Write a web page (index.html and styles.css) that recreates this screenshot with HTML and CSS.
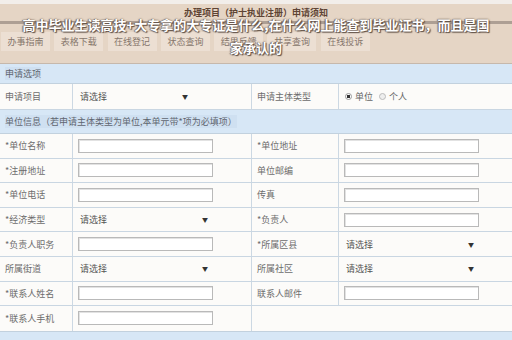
FILE: index.html
```html
<!DOCTYPE html>
<html lang="zh">
<head>
<meta charset="utf-8">
<link rel="stylesheet" href="styles.css">
</head>
<body>
<div class="page">
  <div class="topstrip"></div>
  <header class="header">
    <div class="title">办理项目（护士执业注册）申请须知</div>
    <div class="rule"></div>
    <nav class="tabs">
      <span class="tab">办事指南</span>
      <span class="tab">表格下载</span>
      <span class="tab">在线登记</span>
      <span class="tab">状态查询</span>
      <span class="tab">结果反馈</span>
      <span class="tab">共享查询</span>
      <span class="tab">在线投诉</span>
    </nav>
  </header>

  <div class="sec"><span class="sec-text">申请选项</span></div>
  <div class="row row-tall">
    <div class="cell lab">申请项目</div>
    <div class="cell val"><span class="sel sel-short"><span>请选择</span><span class="arrow">▼</span></span></div>
    <div class="cell lab">申请主体类型</div>
    <div class="cell val radios">
      <span class="radio on"></span><span>单位</span>
      <span class="radio off"></span><span>个人</span>
    </div>
  </div>
  <div class="sec sec-tall"><span class="sec-text">单位信息（若申请主体类型为单位,本单元带*项为必填项）</span></div>

  <div class="row">
    <div class="cell lab">*单位名称</div>
    <div class="cell val"><span class="inp"></span></div>
    <div class="cell lab">*单位地址</div>
    <div class="cell val"><span class="inp"></span></div>
  </div>
  <div class="row">
    <div class="cell lab">*注册地址</div>
    <div class="cell val"><span class="inp"></span></div>
    <div class="cell lab">单位邮编</div>
    <div class="cell val"><span class="inp"></span></div>
  </div>
  <div class="row">
    <div class="cell lab">*单位电话</div>
    <div class="cell val"><span class="inp"></span></div>
    <div class="cell lab">传真</div>
    <div class="cell val"><span class="inp"></span></div>
  </div>
  <div class="row">
    <div class="cell lab">*经济类型</div>
    <div class="cell val"><span class="sel"><span>请选择</span><span class="arrow">▼</span></span></div>
    <div class="cell lab">*负责人</div>
    <div class="cell val"><span class="inp"></span></div>
  </div>
  <div class="row">
    <div class="cell lab">*负责人职务</div>
    <div class="cell val"><span class="inp"></span></div>
    <div class="cell lab">*所属区县</div>
    <div class="cell val"><span class="sel"><span>请选择</span><span class="arrow">▼</span></span></div>
  </div>
  <div class="row">
    <div class="cell lab">所属街道</div>
    <div class="cell val"><span class="sel"><span>请选择</span><span class="arrow">▼</span></span></div>
    <div class="cell lab">所属社区</div>
    <div class="cell val"><span class="sel"><span>请选择</span><span class="arrow">▼</span></span></div>
  </div>
  <div class="row">
    <div class="cell lab">*联系人姓名</div>
    <div class="cell val"><span class="inp"></span></div>
    <div class="cell lab">联系人邮件</div>
    <div class="cell val"><span class="inp"></span></div>
  </div>
  <div class="row last">
    <div class="cell lab">*联系人手机</div>
    <div class="cell val"><span class="inp"></span></div>
    <div class="cell blank"></div>
  </div>
  <div class="sec bottom"></div>
</div>

<div class="overlay">高中毕业生读高技+大专拿的大专证是什么,在什么网上能查到毕业证书，而且是国<br>家承认的</div>
</body>
</html>
```

FILE: styles.css
```css
* { box-sizing: border-box; margin: 0; padding: 0; }
html, body { width: 512px; height: 340px; overflow: hidden; }
body {
  background: #fbf9f6;
  font-family: "Noto Sans CJK SC", "Noto Sans", sans-serif;
  font-size: 9px;
  color: #6a6a6a;
  position: relative;
}
.page { display: flex; flex-direction: column; }
.topstrip { height: 4px; background: #f2eeea; }
.header {
  height: 59px;
  background: #e5d5c5;
  display: flex;
  flex-direction: column;
  align-items: stretch;
}
.title {
  height: 16px;
  line-height: 16px;
  padding-top: 1px;
  text-align: center;
  font-weight: bold;
  color: #5e4434;
}
.rule { height: 3px; margin-top: 1px; background: #ad9f94; }
.tabs {
  display: flex;
  gap: 4.3px;
  margin-top: 8px;
  padding-left: 1px;
}
.tab {
  width: 49px;
  height: 19px;
  line-height: 19px;
  text-align: center;
  background: #ecdfd3;
  color: #86766b;
}
.sec {
  background: #d7e7f6;
  height: 21px;
  border-top: 1px solid #c6b8ab;
  border-bottom: 1px solid #c2d1de;
  display: flex;
  align-items: center;
  padding-left: 5px;
  color: #5f6670;
}
.sec-text { background: #cfe0f1; }
.sec-tall { height: 24px; border-top: none; }
.row {
  display: grid;
  grid-template-columns: 73px 179px 87px 1fr;
  height: 24.6px;
  border-bottom: 1px solid #c9d6e2;
  background: #fcfbf9;
}
.row-tall { height: 26px; }
.cell {
  display: flex;
  align-items: center;
  border-right: 1px solid #ccd8e3;
  border-left: none;
}
.cell:last-child { border-right: none; }
.lab { padding-left: 5px; color: #6c6c6c; white-space: nowrap; }
.val { padding-left: 5px; }
.blank { grid-column: 3 / 5; border-right: none; background: #fcfbf9; }
.row.last { border-bottom: none; }
.inp {
  display: block;
  width: 135px;
  height: 14px;
  background: #fff;
  border: 1px solid #b9b9b9;
  box-shadow: inset 1px 1px 0 #e2e2e2;
}
.sel {
  display: flex;
  justify-content: space-between;
  align-items: center;
  width: 130px;
  padding-left: 2px;
  color: #555;
}
.sel-short { width: 110px; }
.arrow { font-size: 6px; color: #333; }
.radios { gap: 3px; padding-left: 6px; color: #666; }
.radio {
  width: 7px; height: 7px; border-radius: 50%;
  border: 1px solid #999;
  background: #fff;
}
.radio.on { background: radial-gradient(circle, #333 0 1.5px, #fff 2px); }
.radio.off { border-color: #bbb; margin-left: 3px; background: #eee; }
.bottom { height: 12px; border-top: 1px solid #c2d1de; }
.overlay {
  position: absolute;
  top: 13px;
  left: 0;
  width: 512px;
  text-align: center;
  white-space: nowrap;
  font-size: 13px;
  font-weight: bold;
  line-height: 23px;
  color: #fff;
  text-shadow: 0 0 2px #6a5a50, 1px 1px 1px #5a4a40, -1px 0 1px #7a6a60;
}
```
